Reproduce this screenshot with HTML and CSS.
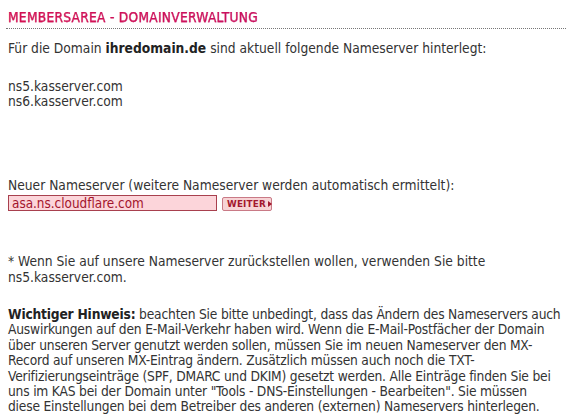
FILE: index.html
```html
<!DOCTYPE html>
<html lang="de">
<head>
<meta charset="utf-8">
<title>Membersarea - Domainverwaltung</title>
<link rel="stylesheet" href="styles.css">
</head>
<body>
<div class="page">
  <div class="head">
    <h1 class="title">MEMBERSAREA - DOMAINVERWALTUNG</h1>
  </div>
  <div class="content">
    <p class="intro">Für die Domain <b>ihredomain.de</b> sind aktuell folgende Nameserver hinterlegt:</p>
    <p class="ns-list">ns5.kasserver.com<br>ns6.kasserver.com</p>
    <form class="ns-form">
      <label class="ns-label" for="ns">Neuer Nameserver (weitere Nameserver werden automatisch ermittelt):</label>
      <div class="ns-row">
        <input class="ns-input" id="ns" type="text" value="asa.ns.cloudflare.com">
        <button class="btn-next" type="button">WEITER<span class="arrow"></span></button>
      </div>
    </form>
    <p class="note">* Wenn Sie auf unsere Nameserver zurückstellen wollen, verwenden Sie bitte ns5.kasserver.com.</p>
    <p class="hint"><b>Wichtiger Hinweis:</b> beachten Sie bitte unbedingt, dass das Ändern des Nameservers auch Auswirkungen auf den E-Mail-Verkehr haben wird. Wenn die E-Mail-Postfächer der Domain über unseren Server genutzt werden sollen, müssen Sie im neuen Nameserver den MX-Record auf unseren MX-Eintrag ändern. Zusätzlich müssen auch noch die TXT-Verifizierungseinträge (SPF, DMARC und DKIM) gesetzt werden. Alle Einträge finden Sie bei uns im KAS bei der Domain unter "Tools - DNS-Einstellungen - Bearbeiten". Sie müssen<br>diese Einstellungen bei dem Betreiber des anderen (externen) Nameservers hinterlegen.</p>
  </div>
</div>
</body>
</html>
```
FILE: styles.css
```css
html, body {
  margin: 0;
  padding: 0;
  background: #fff;
}

body {
  font-family: "DejaVu Sans Condensed", "Noto Sans", sans-serif;
  font-size: 13.7px;
  line-height: 15.4px;
  color: #333;
}

.page {
  padding: 0 6px;
}

.head {
  border-bottom: 1px dotted #777;
  padding: 9px 2px 3px;
}

.title {
  margin: 0;
  font-family: "DejaVu Sans Condensed", "Noto Sans", sans-serif;
  font-size: 13.6px;
  font-weight: normal;
  line-height: 16px;
  letter-spacing: 0.3px;
  -webkit-text-stroke: 0.25px #c8105e;
  color: #c8105e;
  background: linear-gradient(90deg, #d8124e, #b80f74);
  -webkit-background-clip: text;
  background-clip: text;
  -webkit-text-fill-color: transparent;
}

.content {
  padding: 0 2px;
  width: 558px;
}

.content p {
  margin: 0;
}

.intro {
  padding-top: 12px;
}

.content b {
  color: #222;
}

.ns-list {
  margin-top: 22.6px !important;
}

.ns-form {
  margin: 68px 0 0;
}

.ns-label {
  display: block;
}

.ns-row {
  display: flex;
  align-items: flex-end;
  gap: 5px;
  margin-top: 2px;
}

.ns-input {
  box-sizing: border-box;
  width: 209px;
  height: 16px;
  margin: 0;
  padding: 0 3px;
  border: 1px solid #a8404e;
  background: #fcd5da;
  color: #a3142c;
  font-family: "DejaVu Sans Condensed", "Noto Sans", sans-serif;
  font-size: 13.4px;
  line-height: 14px;
  outline: none;
}

.btn-next {
  box-sizing: border-box;
  display: flex;
  align-items: center;
  gap: 2px;
  height: 14px;
  width: 50px;
  margin: 0;
  padding: 0 0 0 4px;
  border: 1px solid #c97a86;
  border-radius: 2px;
  background: #f7d3d5;
  color: #a3182e;
  font-family: "DejaVu Sans", sans-serif;
  font-size: 8.8px;
  font-weight: bold;
  line-height: 11px;
  letter-spacing: 0.2px;
}

.arrow {
  width: 0;
  height: 0;
  border-top: 3.5px solid transparent;
  border-bottom: 3.5px solid transparent;
  border-left: 4px solid #a3182e;
}

.note {
  margin-top: 43px !important;
}

.hint {
  margin-top: 22px !important;
  letter-spacing: -0.2px;
}
```
